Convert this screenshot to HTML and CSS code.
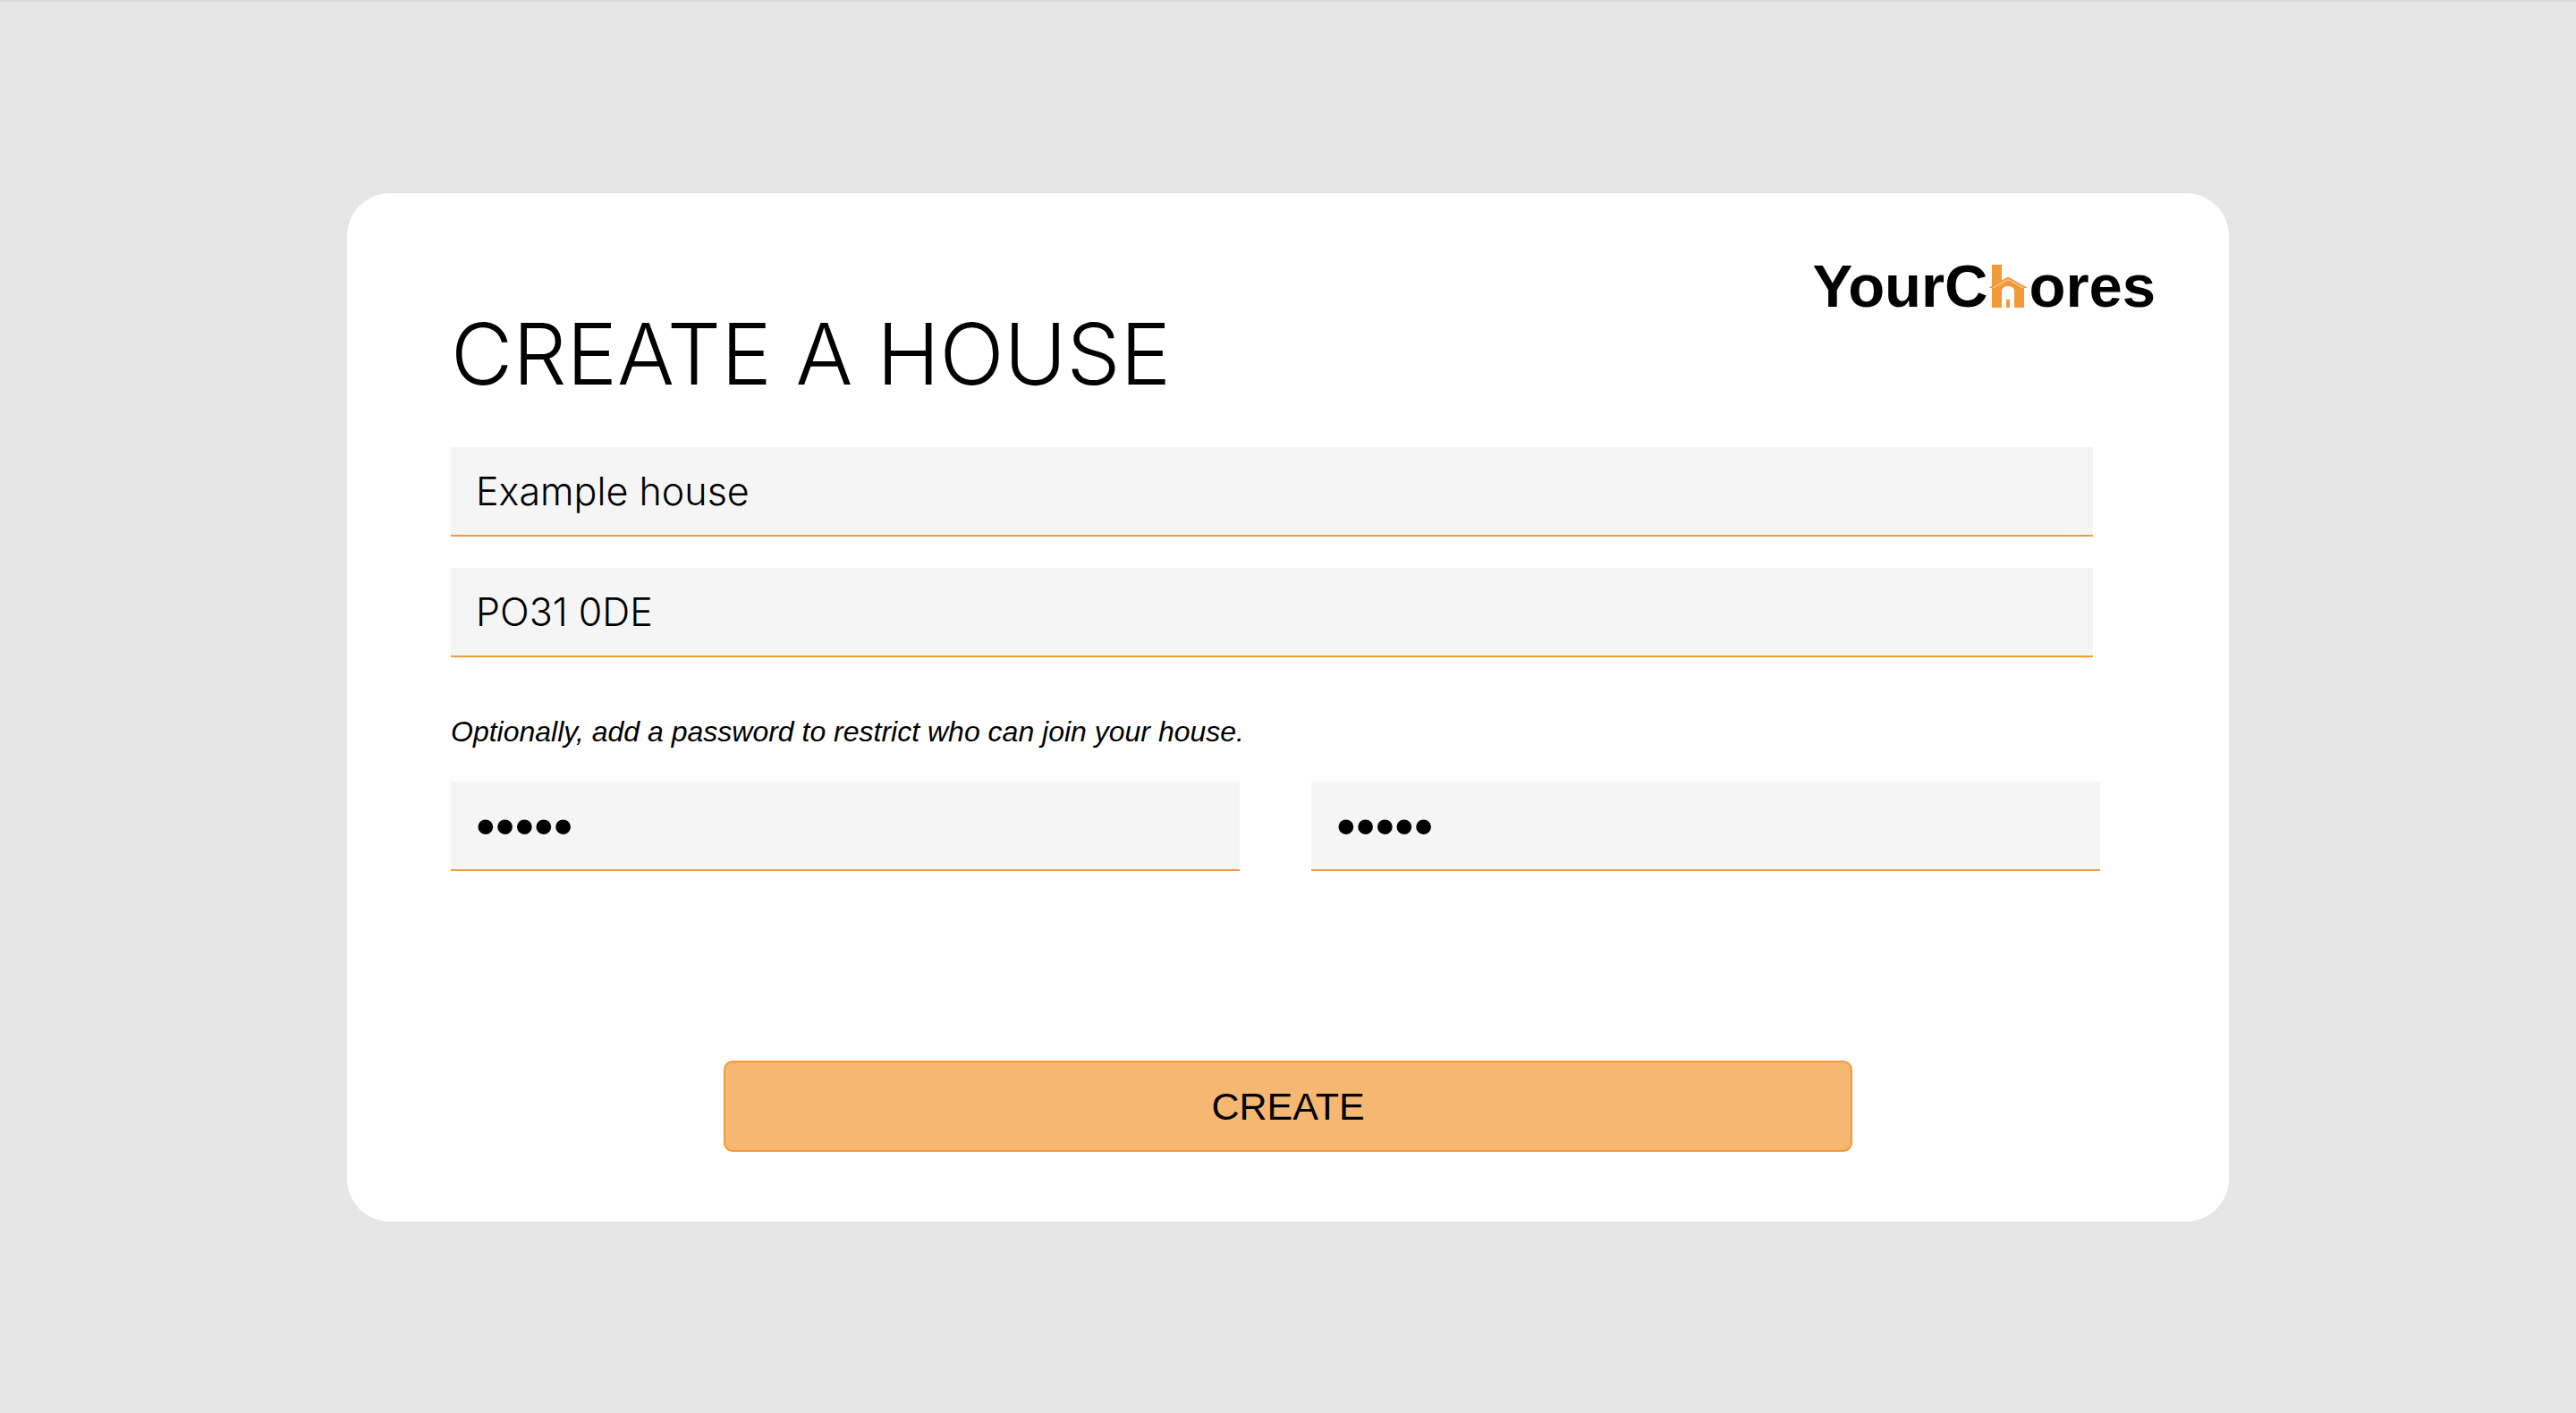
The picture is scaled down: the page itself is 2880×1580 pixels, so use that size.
FILE: index.html
```html
<!DOCTYPE html>
<html lang="en">
<head>
<meta charset="utf-8">
<meta name="viewport" content="width=device-width, initial-scale=1">
<title>Create a house - YourChores</title>
<link rel="stylesheet" href="styles.css">
</head>
<body>
<main class="card">
  <div class="logo">
    <span>YourC</span>
    <svg class="logo-house" viewBox="0 0 44 50" aria-hidden="true">
      <path class="logo-wall" d="M4 1H15V49H4Z"/>
      <path class="logo-wall" d="M4 26L22 17L40 26V49H29V30Q28 25 22 25Q16 25 15 30V49H4Z"/>
      <path class="logo-wall" d="M0 27L22 14.5L44 27H38L22 18L6 27Z"/>
      <path class="logo-eave" d="M5 27L22 17.5L39 27"/>
      <path class="logo-wall" d="M20 40H24V49H20Z"/>
    </svg>
    <span>ores</span>
  </div>
  <form>
    <div class="fields">
      <h1 class="title">CREATE A HOUSE</h1>
      <input class="field field-wide" type="text" value="Example house" aria-label="House name">
      <input class="field field-wide" type="text" value="PO31 0DE" aria-label="Postcode">
      <p class="hint" id="hint">Optionally, add a password to restrict who can join your house.</p>
      <div class="passwords">
        <input class="field field-password" type="password" value="house" aria-label="Password" aria-describedby="hint">
        <input class="field field-password" type="password" value="house" aria-label="Confirm password">
      </div>
    </div>
    <div class="actions">
      <button class="create" type="submit">CREATE</button>
    </div>
  </form>
</main>
</body>
</html>
```
FILE: styles.css
```css
* {
  box-sizing: border-box;
}

body {
  margin: 0;
  min-height: 100vh;
  display: flex;
  align-items: center;
  justify-content: center;
  border-top: 2px solid #d9d9de;
  background: #e6e6e6;
  color: #000;
  font-family: "Liberation Sans", Arial, sans-serif;
}

.card {
  width: 80%;
  max-width: 2104px;
  padding: 72px 0 78px;
  border-radius: 48px;
  background: #fff;
}

.logo {
  display: flex;
  justify-content: flex-end;
  align-items: center;
  gap: 1px;
  padding-right: 82px;
  font-size: 67px;
  font-weight: 700;
  line-height: 64px;
}

.logo-house {
  width: 44px;
  height: 50px;
}

.logo-wall {
  fill: #f29a38;
}

.logo-eave {
  fill: none;
  stroke: #fbdcb8;
  stroke-width: 1;
}

.fields {
  display: flex;
  flex-direction: column;
  padding: 0 144px 0 116px;
}

.title {
  margin: 0 0 60px;
  font-family: Inter, "Liberation Sans", sans-serif;
  font-size: 95px;
  font-weight: 300;
  line-height: 88px;
}

.field {
  min-width: 0;
  height: 100px;
  padding: 0 28px;
  border: 0;
  border-bottom: 2px solid #f29a38;
  border-radius: 0;
  background: #f5f5f5;
  color: #000;
  font-family: Inter, "Liberation Sans", sans-serif;
  font-size: 43px;
  font-weight: 300;
}

.field-wide {
  margin: 0 8px 35px 0;
}

.field-password {
  font-family: "Liberation Sans", Arial, sans-serif;
  font-size: 62px;
}

.hint {
  margin: 28px 0 36px;
  font-size: 32px;
  font-style: italic;
  line-height: 40px;
}

.passwords {
  display: grid;
  grid-template-columns: 1fr 1fr;
  gap: 80px;
}

.actions {
  display: flex;
  justify-content: center;
  margin-top: 212px;
}

.create {
  width: 60%;
  height: 102px;
  border: 2px solid #f29a38;
  border-radius: 10px;
  background: #f6b773;
  color: #000;
  font-family: inherit;
  font-size: 43px;
}
```
